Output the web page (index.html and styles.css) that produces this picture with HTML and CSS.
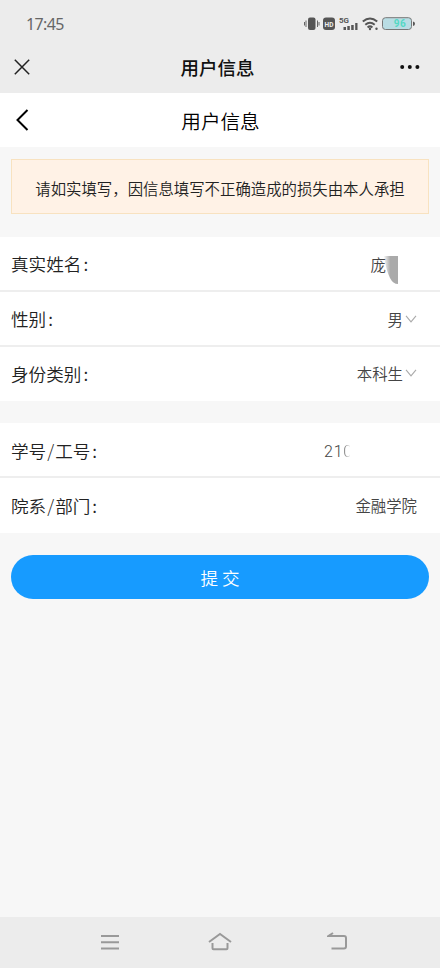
FILE: index.html
```html
<!DOCTYPE html>
<html lang="zh-CN">
<head>
<meta charset="utf-8">
<title>用户信息</title>
<link rel="stylesheet" href="styles.css">
</head>
<body>
<div class="phone">
  <div class="status">
    <span class="time">17:45</span>
    <svg class="status-icons" width="112" height="16" viewBox="0 0 112 16" fill="#555">
      <rect x="4" y="1.5" width="7.5" height="12.5" rx="2"/>
      <path d="M2 4.5v6.5M.5 6v3.5M13.5 4.5v6.5M15 6v3.5" stroke="#666" fill="none"/>
      <rect x="19" y="1.5" width="12" height="12.5" rx="3"/>
      <text x="25" y="10.6" class="hd">HD</text>
      <text x="35" y="6.7" class="five">5G</text>
      <path d="M39.5 11h2.500v3h-2.500zM43.3 10h2.500v4h-2.500zM47.2 9h2.500v5h-2.500zM51.200 7h2.300v7h-2.300z"/>
      <g fill="none" stroke="#555" stroke-width="2"><path d="M58.800 5.500q7.200-6 14.400 0M61.300 8.700q4.700-3.900 9.400 0M63.600 11.400q2.400-2 4.800 0"/></g>
      <circle cx="66" cy="13" r="1.200"/><circle cx="72.500" cy="12.700" r="1.200"/>
      <rect x="78.500" y="1.700" width="29" height="11.800" rx="3" fill="#b9dde4" stroke="#777"/>
      <path d="M109 5.500q2 .5 2 2.200t-2 2.200z"/>
      <text x="96" y="11.300" class="battery">96</text>
    </svg>
  </div>
  <div class="appbar">
    <svg class="close" width="16" height="16" viewBox="0 0 16 16"><path d="M.8.8l14.400 14.400M15.200.8L.8 15.200" fill="none" stroke="#222" stroke-width="1.500"/></svg>
    <span class="app-title">用户信息</span>
    <svg width="20" height="6" viewBox="0 0 20 6" fill="#111"><circle cx="2.200" cy="2" r="2"/><circle cx="9.800" cy="2" r="2"/><circle cx="17.400" cy="2" r="2"/></svg>
  </div>
  <div class="navbar">
    <svg width="14" height="22" viewBox="0 0 14 22"><path d="M12.500 1L2.500 11l10 10" fill="none" stroke="#000" stroke-width="2"/></svg>
    <span class="nav-title">用户信息</span>
    <span class="nav-end"></span>
  </div>
  <div class="notice">请如实填写，因信息填写不正确造成的损失由本人承担</div>
  <div class="group">
    <div class="cell"><span>真实姓名<u>:</u></span>
      <span class="value name">庞<svg class="smudge" width="18" height="32" viewBox="0 0 18 32"><defs><linearGradient id="fade"><stop offset="0" stop-color="#aaa" stop-opacity=".1"/><stop offset=".45" stop-color="#aaa"/></linearGradient></defs><path d="M1 0h14v28q-5 0-8-6Q3 14 1 0z" fill="url(#fade)"/></svg></span></div>
    <div class="cell"><span>性别<u>:</u></span><span class="value select">男<svg width="12" height="8" viewBox="0 0 12 8"><path d="M1 .8l5 6 5-6" fill="none" stroke="#aaa" stroke-width="1.100"/></svg></span></div>
    <div class="cell"><span>身份类别<u>:</u></span><span class="value select">本科生<svg width="12" height="8" viewBox="0 0 12 8"><path d="M1 .8l5 6 5-6" fill="none" stroke="#aaa" stroke-width="1.100"/></svg></span></div>
  </div>
  <div class="group">
    <div class="cell"><span>学号<i>/</i>工号<u>:</u></span><span class="value number">21<b>0</b></span></div>
    <div class="cell"><span>院系<i>/</i>部门<u>:</u></span><span class="value">金融学院</span></div>
  </div>
  <button class="submit">提 交</button>
  <div class="system">
    <svg width="20" height="18" viewBox="0 0 20 18"><path d="M1 3h18M1 9.200h18M1 15.400h18"/></svg>
    <svg width="24" height="20" viewBox="0 0 24 20"><path d="M1 10L12 2l11 8M4.500 11v5.300q0 1 1 1h13q1 0 1-1V11"/></svg>
    <svg width="20" height="20" viewBox="0 0 20 20"><path d="M6 1L1.500 4H17q2 0 2 2v8.500q0 2-2 2H4.500"/></svg>
  </div>
</div>
</body>
</html>
```
FILE: styles.css
```css
* { box-sizing: border-box; }
body { margin: 0; font-family: "Noto Sans CJK SC", sans-serif; }
.phone { display: flex; flex-direction: column; width: 440px; height: 968px; background: #f7f7f7; color: #222; }
.status { display: flex; justify-content: space-between; align-items: center; height: 42px; padding: 6px 24px 0 26px; background: #ececec; }
.time { font: 16px "Noto Sans", sans-serif; letter-spacing: -.6px; color: #666; }
.status-icons { display: block; }
.hd { font: bold 6.5px Roboto, sans-serif; fill: #eee; text-anchor: middle; }
.five { font: bold 8px Roboto, sans-serif; }
.battery { font: bold 10px Roboto, sans-serif; fill: #54d9c4; text-anchor: middle; letter-spacing: .5px; }
.appbar, .navbar { display: flex; align-items: center; justify-content: space-between; }
.appbar { height: 51px; padding: 0 20px 0 14px; background: #ececec; }
.close { margin-top: -1px; }
.app-title { margin: -2px 0 0 5px; font-size: 18.500px; font-weight: 500; line-height: 28px; color: #111; }
.navbar { height: 54px; padding: 0 14px 0 15px; background: #fff; }
.nav-title { margin-top: 2px; font-size: 19.600px; font-weight: 350; line-height: 28px; color: #000; }
.nav-end { width: 14px; }
.notice { height: 55px; margin: 12px 11px 23px; border: 1px solid #f8e2c0; background: #fff2e6; font-size: 15.400px; font-weight: 350; line-height: 56px; text-align: center; white-space: nowrap; color: #222; }
.group { margin-bottom: 22px; background: #fff; }
.cell { display: flex; justify-content: space-between; align-items: center; height: 54.800px; padding: 1px 23px 0 11px; border-bottom: 2px solid #eee; font-size: 17.600px; font-weight: 350; white-space: nowrap; }
.cell:last-child { border-color: #fff; }
.cell i { font-style: normal; font-weight: 300; margin: 0 1px; }
.cell u { margin-left: 2px; text-decoration: none; }
.value { font-size: 15.400px; color: #444; }
.select { display: flex; align-items: center; gap: 2px; }
.name { position: relative; margin-right: 31px; }
.smudge { position: absolute; left: 12px; top: 3px; }
.number { margin: 2px 64px 0 0; font-family: Roboto, sans-serif; font-size: 16px; font-weight: 300; letter-spacing: .8px; }
.number b { font-weight: 300; color: transparent; background: linear-gradient(90deg, #777 15%, #fff 75%); background-clip: text; -webkit-background-clip: text; }
.submit { height: 44px; margin: 0 11px; padding: 1px 0 0; border: 0; border-radius: 22px; background: #179bff; color: #fff; font: 350 17.600px "Noto Sans CJK SC", sans-serif; }
.system { display: flex; justify-content: space-between; align-items: center; height: 51px; margin-top: auto; padding: 0 93px 2px 100px; background: #ececec; }
.system svg { fill: none; stroke: #999; stroke-width: 2; }
.system svg:nth-child(2) { margin-right: 8px; }
```
